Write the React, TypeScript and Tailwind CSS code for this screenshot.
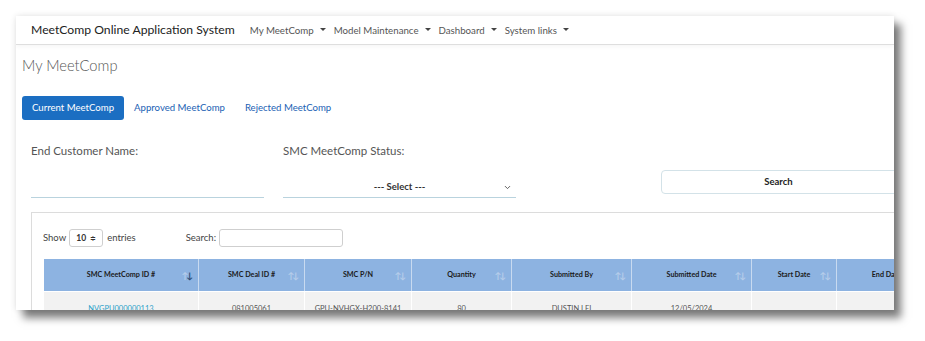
import { ChevronDown } from 'lucide-react';

const FONT = 'Lato, "Open Sans", Arial, sans-serif';

const NAV_ITEMS = ['My MeetComp', 'Model Maintenance', 'Dashboard', 'System links'];

const COLUMNS = [
  { label: 'SMC MeetComp ID #', w: 'w-[155px]', active: true },
  { label: 'SMC Deal ID #', w: 'w-[106px]' },
  { label: 'SMC P/N', w: 'w-[107px]' },
  { label: 'Quantity', w: 'w-[100px]' },
  { label: 'Submitted By', w: 'w-[120px]' },
  { label: 'Submitted Date', w: 'w-[120px]' },
  { label: 'Start Date', w: 'w-[85px]' },
  { label: 'End Date', w: 'w-[100px]' },
];

const ROW = ['NVGPU000000113', '081005061', 'GPU-NVHGX-H200-8141', '80', 'DUSTIN LEI', '12/05/2024', '', ''];

function Caret() {
  return <span className="ml-[6px] inline-block border-x-[3px] border-t-[3px] border-x-transparent border-t-[#444] align-middle" />;
}

function SortIcon({ active }: { active?: boolean }) {
  return (
    <span className="absolute right-[7px] top-1/2 -translate-y-1/2 flex text-[9px] leading-none tracking-[-2px]">
      <span className="text-[#b6cdea]">↑</span>
      <span className={active ? 'text-[#2c4a70]' : 'text-[#b6cdea]'}>↓</span>
    </span>
  );
}

export default function App() {
  return (
    <div className="w-[925px] h-[341px] bg-white pl-[16px] pt-[16px]" style={{ fontFamily: FONT }}>
      <div className="w-[878px] h-[294px] overflow-hidden bg-white shadow-[0_0_6px_rgba(0,0,0,0.12),7px_8px_8px_rgba(0,0,0,0.5)]">
        {/* navbar */}
        <div className="flex h-[29px] items-center border-b border-[#dedede] pl-[15px] shadow-[0_2px_4px_rgba(0,0,0,0.04)]">
          <span className="text-[12.2px] text-[#222]">MeetComp Online Application System</span>
          <div className="ml-[15px] flex gap-[8px]">
            {NAV_ITEMS.map((item) => (
              <span key={item} className="flex items-center text-[9.7px] text-[#555]">
                {item}
                <Caret />
              </span>
            ))}
          </div>
        </div>

        <div className="px-[6px]">
          <h1 className="mt-[10px] text-[14.7px] font-light leading-[20px] text-[#555]">My MeetComp</h1>

          {/* tabs */}
          <div className="mt-[21px] flex items-center text-[9.6px]">
            <span className="flex h-[24px] items-center rounded-[3px] bg-[#1b6ec2] px-[10px] text-white">Current MeetComp</span>
            <span className="px-[10px] text-[#1b5fb4]">Approved MeetComp</span>
            <span className="px-[10px] text-[#1b5fb4]">Rejected MeetComp</span>
          </div>

          {/* filters */}
          <div className="ml-[9px] mt-[23px] flex">
            <div className="w-[233px] shrink-0">
              <div className="text-[11.5px] leading-[16px] text-[#555]">End Customer Name:</div>
              <div className="mt-[38px] h-[1px] bg-[#b9d3de]" />
            </div>
            <div className="ml-[19px] w-[233px] shrink-0">
              <div className="text-[11.5px] leading-[16px] text-[#555]">SMC MeetComp Status:</div>
              <div className="relative mt-[18px] flex h-[21px] items-center justify-center border-b border-[#b9d3de] text-[9.5px] font-bold text-[#333]">
                --- Select ---
                <ChevronDown size={9} strokeWidth={2.5} className="absolute right-[4px] top-[6px] text-[#555]" />
              </div>
            </div>
            <div className="ml-[145px] mt-[27px] flex h-[24px] w-[260px] shrink-0 items-center justify-center rounded-[4px] border border-[#d3e2e8] text-[9.5px] font-bold text-[#222]">
              <span className="-ml-[25px]">Search</span>
            </div>
          </div>

          {/* card */}
          <div className="ml-[9px] mt-[14px] w-[900px] border border-[#dcdcdc] px-[11px] pt-[16px]">
            <div className="flex items-center text-[9.5px] text-[#444]">
              <span>Show</span>
              <span className="ml-[3px] flex h-[18px] w-[34px] items-center justify-center gap-[4px] rounded-[3px] border border-[#cfcfcf] text-[8.5px] font-bold text-[#333]">
                10 <span className="text-[7px] font-normal">≑</span>
              </span>
              <span className="ml-[4px]">entries</span>
              <span className="ml-[50px]">Search:</span>
              <span className="ml-[3px] h-[18px] w-[124px] rounded-[3px] border border-[#cfcfcf]" />
            </div>

            <div className="ml-[1px] mt-[12px] flex">
              {COLUMNS.map((c, i) => (
                <div key={c.label} className={`${c.w} shrink-0`}>
                  <div className="relative flex h-[32px] items-center justify-center border-r border-[#c8daf0] bg-[#8db3e1] text-[7.2px] font-bold text-[#1a1a1a]">
                    {c.label}
                    <SortIcon active={c.active} />
                  </div>
                  <div className="mt-[1px] flex h-[34px] items-center justify-center border-r border-white bg-[#f2f2f2] text-[7.5px] text-[#555]">
                    <span className={c.active ? 'text-[#2aa0c8]' : ''}>{ROW[i]}</span>
                  </div>
                </div>
              ))}
            </div>
          </div>
        </div>
      </div>
    </div>
  );
}
